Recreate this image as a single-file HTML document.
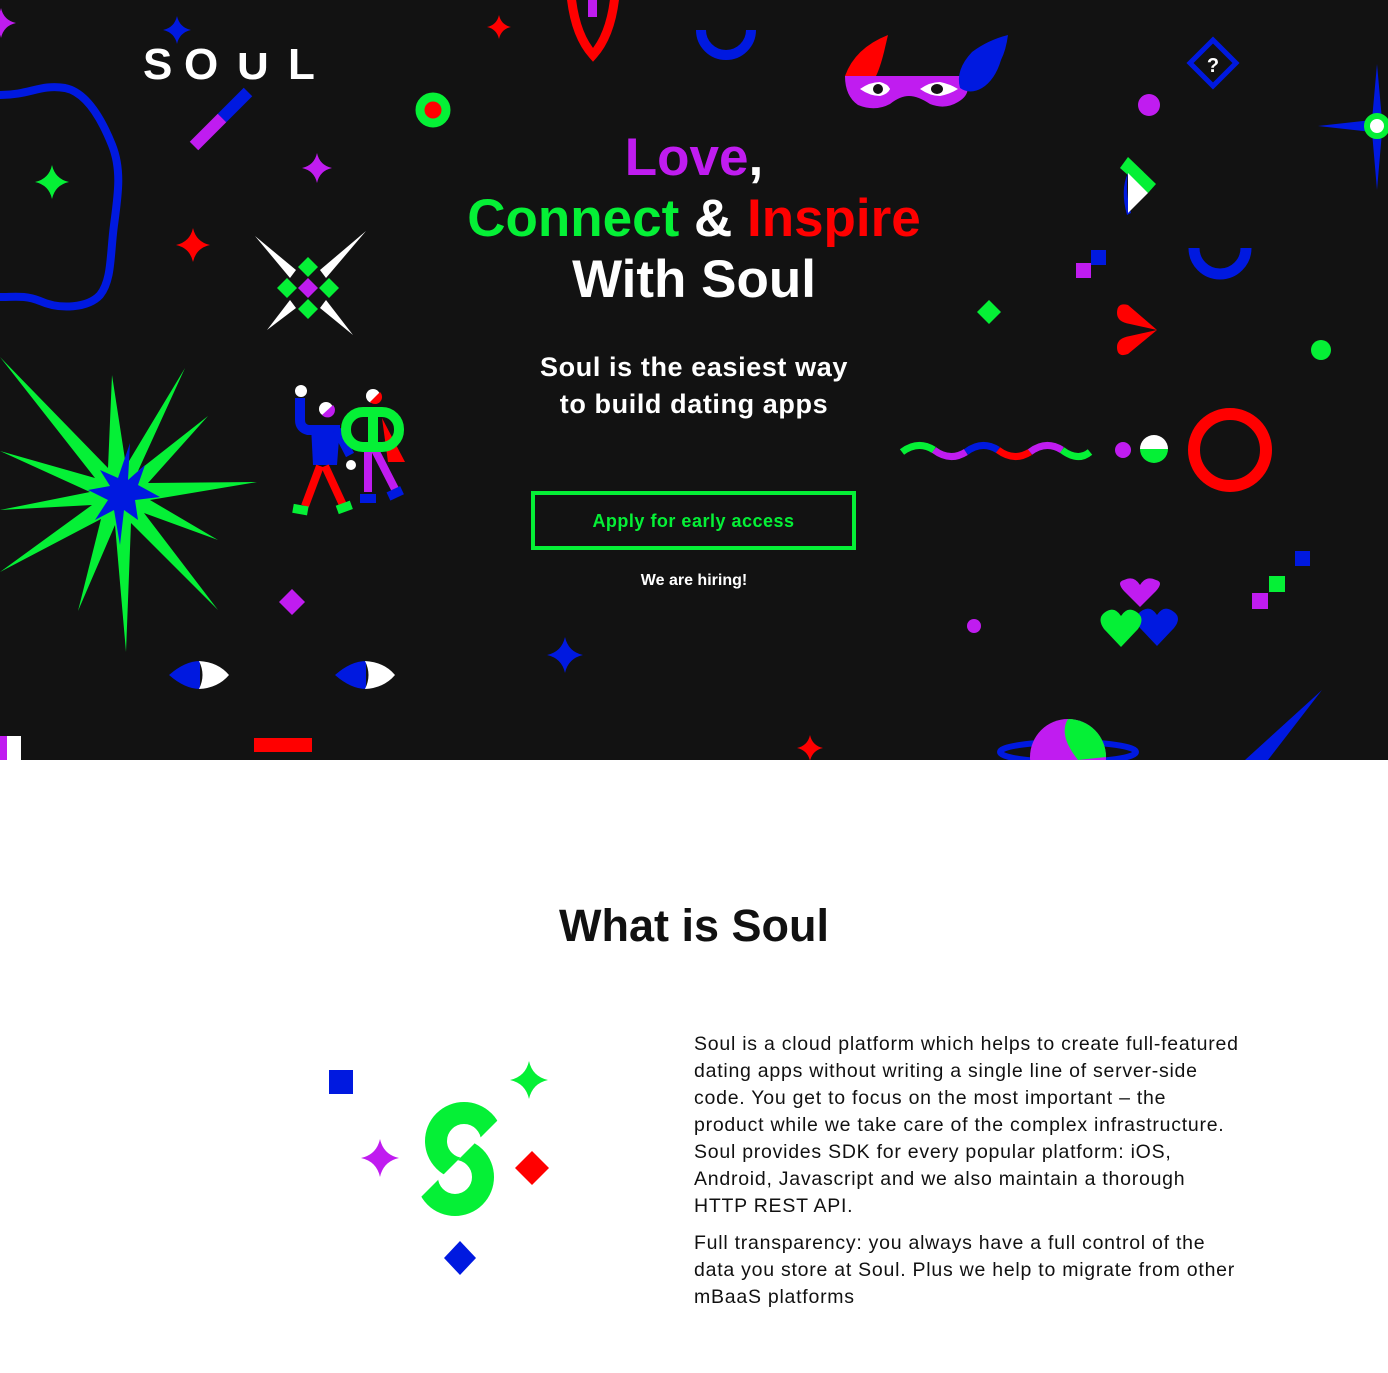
<!DOCTYPE html>
<html><head><meta charset="utf-8">
<style>
*{margin:0;padding:0;box-sizing:border-box}
html,body{width:1388px;height:1373px;background:#fff;overflow:hidden;font-family:"Liberation Sans",sans-serif}
.hero{position:relative;width:1388px;height:760px;background:#121212;overflow:hidden}
.hero svg{position:absolute;left:0;top:0}
.title{position:absolute;left:0;width:1388px;top:127px;text-align:center;font-weight:bold;font-size:53px;line-height:61px;color:#fff}
.sub{position:absolute;left:0;width:1388px;top:349px;text-align:center;font-weight:bold;font-size:27px;line-height:37px;color:#fff;letter-spacing:0.6px}
.btn{position:absolute;left:531px;top:491px;width:325px;height:59px;border:4px solid #05f036;color:#05f036;font-weight:bold;font-size:18px;line-height:53px;text-align:center;letter-spacing:0.5px}
.hire{position:absolute;left:0;width:1388px;top:572px;text-align:center;color:#fff;font-weight:bold;font-size:16px}
.what{position:absolute;left:0;width:1388px;top:900px;text-align:center;font-weight:bold;font-size:45px;color:#111}
.txt{position:absolute;left:694px;top:1031px;width:640px;font-size:19.5px;line-height:27px;color:#111;letter-spacing:0.75px}
.txt p{margin-bottom:10px}
</style></head><body>
<div class="hero">
<svg width="1388" height="760" viewBox="0 0 1388 760">
<defs>
<symbol id="st" viewBox="-10 -10 20 20"><path d="M0,-10 Q1.8,-1.8 10,0 Q1.8,1.8 0,10 Q-1.8,1.8 -10,0 Q-1.8,-1.8 0,-10Z"/></symbol>
</defs>
<use href="#st" x="-14" y="8" width="30" height="30" fill="#c01cf0"/>
<use href="#st" x="163" y="16" width="28" height="28" fill="#0019e0"/>
<g fill="#fff" font-family="Liberation Sans" font-weight="bold" font-size="44">
<text x="143" y="79">S</text><text x="184" y="79">O</text><text x="237" y="79">U</text><text x="288" y="79">L</text>
</g>
<rect x="237" y="46" width="30" height="7" fill="#121212"/>
<path d="M0,95 C30,95 40,84 65,88 C85,92 100,115 112,145 C122,170 118,195 114,225 C110,255 112,280 100,295 C88,308 60,310 40,301 C25,295 15,297 0,297" fill="none" stroke="#0019e0" stroke-width="8"/>
<use href="#st" x="35" y="165" width="34" height="34" fill="#05f036"/>
<line x1="248" y1="92" x2="222" y2="118" stroke="#0019e0" stroke-width="12"/>
<line x1="222" y1="118" x2="194" y2="146" stroke="#c01cf0" stroke-width="12"/>
<circle cx="433" cy="110" r="13" fill="#ff0000" stroke="#05f036" stroke-width="9"/>
<use href="#st" x="302" y="153" width="30" height="30" fill="#c01cf0"/>
<use href="#st" x="176" y="228" width="34" height="34" fill="#ff0000"/>
<g fill="#fff">
<polygon points="255,236 296,270 290,278"/><polygon points="366,231 326,278 320,270"/>
<polygon points="267,330 290,300 296,308"/><polygon points="353,335 320,308 326,300"/>
</g>
<g fill="#05f036">
<polygon points="308,257 318,267 308,277 298,267"/><polygon points="287,278 297,288 287,298 277,288"/>
<polygon points="329,278 339,288 329,298 319,288"/><polygon points="308,299 318,309 308,319 298,309"/>
</g>
<polygon points="308,278 318,288 308,298 298,288" fill="#c01cf0"/>
<polygon fill="#05f036" points="112,375 126,466 185,368 138,471 208,416 148,483 257,482 150,500 218,540 144,513 218,610 131,523 126,652 115,525 78,611 101,519 0,572 92,505 0,510 90,492 0,451 95,478 0,357 108,468"/>
<polygon fill="#0019e0" points="130,443 128,480 145,465 138,485 160,497 135,500 138,520 124,510 120,545 114,510 95,520 108,500 88,490 110,486 100,470 118,478"/>
<circle cx="301" cy="391" r="6" fill="#fff"/>
<path d="M300,398 V420 Q300,428 308,430 H340" fill="none" stroke="#0019e0" stroke-width="10"/>
<polygon points="311,426 340,426 337,465 313,465" fill="#0019e0"/>
<line x1="337" y1="430" x2="350" y2="455" stroke="#0019e0" stroke-width="9"/>
<circle cx="326" cy="409" r="7" fill="#fff"/><path d="M333,405 A7,7 0 0 1 322,415 Z" fill="#c01cf0"/>
<circle cx="351" cy="465" r="5" fill="#fff"/>
<line x1="320" y1="466" x2="305" y2="506" stroke="#ff0000" stroke-width="8"/>
<line x1="325" y1="466" x2="343" y2="505" stroke="#ff0000" stroke-width="8"/>
<rect x="293" y="505" width="15" height="9" fill="#05f036" transform="rotate(10 300 509)"/>
<rect x="337" y="503" width="15" height="9" fill="#05f036" transform="rotate(-20 344 508)"/>
<polygon points="382,418 405,462 388,462" fill="#ff0000"/>
<line x1="368" y1="448" x2="368" y2="492" stroke="#c01cf0" stroke-width="8"/>
<line x1="374" y1="448" x2="396" y2="491" stroke="#c01cf0" stroke-width="8"/>
<rect x="360" y="494" width="16" height="9" fill="#0019e0"/>
<rect x="388" y="489" width="15" height="9" fill="#0019e0" transform="rotate(-25 395 494)"/>
<rect x="346" y="412" width="53" height="35" rx="17" fill="none" stroke="#05f036" stroke-width="10"/>
<rect x="368" y="412" width="10" height="35" fill="#05f036"/>
<circle cx="373" cy="396" r="7" fill="#fff"/><path d="M380,392 A7,7 0 0 1 370,402 Z" fill="#ff0000"/>
<polygon points="292,589 305,602 292,615 279,602" fill="#c01cf0"/>
<path d="M169,675 Q185,661 200,661 L200,689 Q185,689 169,675Z" fill="#0019e0"/>
<path d="M199,661 Q218,662 229,675 Q218,688 199,689 Q206,675 199,661Z" fill="#fff"/>
<path d="M335,675 Q351,661 366,661 L366,689 Q351,689 335,675Z" fill="#0019e0"/>
<path d="M365,661 Q384,662 395,675 Q384,688 365,689 Q372,675 365,661Z" fill="#fff"/>
<rect x="0" y="736" width="7" height="24" fill="#c01cf0"/><rect x="7" y="736" width="14" height="24" fill="#fff"/>
<rect x="254" y="738" width="58" height="14" fill="#ff0000"/>
<use href="#st" x="487" y="15" width="24" height="24" fill="#ff0000"/>
<path d="M571,-5 Q575,35 593,55 Q611,35 615,-5" fill="none" stroke="#ff0000" stroke-width="9"/>
<rect x="588" y="0" width="9" height="17" fill="#c01cf0"/>
<path d="M701,30 A25,25 0 0 0 751,30" fill="none" stroke="#0019e0" stroke-width="10"/>
<use href="#st" x="547" y="637" width="36" height="36" fill="#0019e0"/>
<use href="#st" x="797" y="735" width="26" height="26" fill="#ff0000"/>
<path d="M845,76 Q855,48 888,35 L884,52 Q880,68 876,76Z" fill="#ff0000"/>
<path d="M845,76 H962 Q975,92 958,102 Q945,110 930,104 Q918,96 909,96 Q900,96 890,104 Q875,112 858,105 Q845,96 845,76Z" fill="#c01cf0"/>
<path d="M960,88 Q955,70 972,52 Q988,40 1008,35 Q1006,50 1001,60 Q995,80 982,88 Q970,95 960,88Z" fill="#0019e0"/>
<path d="M860,89 Q870,82 880,82 Q888,84 890,89 Q888,94 880,96 Q870,96 860,89Z" fill="#fff"/><ellipse cx="878" cy="89" rx="5" ry="5" fill="#121212"/>
<path d="M920,89 Q930,82 940,82 Q950,84 958,89 Q950,94 940,96 Q930,96 920,89Z" fill="#fff"/><ellipse cx="937" cy="89" rx="6" ry="5" fill="#121212"/>
<polygon points="1213,40 1236,63 1213,86 1190,63" fill="none" stroke="#0019e0" stroke-width="5"/>
<text x="1213" y="72" font-family="Liberation Sans" font-weight="bold" font-size="20" fill="#fff" text-anchor="middle">?</text>
<circle cx="1149" cy="105" r="11" fill="#c01cf0"/>
<polygon points="1377,64 1382,120 1388,126 1382,132 1377,190 1372,132 1318,126 1372,120" fill="#0019e0"/>
<circle cx="1377" cy="126" r="10" fill="#fff" stroke="#05f036" stroke-width="6"/>
<polygon points="1120,168 1128,157 1156,184 1148,193" fill="#05f036"/>
<path d="M1128,173 Q1120,190 1127,215 L1131,213 Q1125,192 1128,173Z" fill="#0019e0"/>
<polygon points="1128,173 1148,193 1128,213" fill="#fff"/>
<rect x="1076" y="263" width="15" height="15" fill="#c01cf0"/><rect x="1091" y="250" width="15" height="15" fill="#0019e0"/>
<path d="M1194,248 A26,26 0 0 0 1246,248" fill="none" stroke="#0019e0" stroke-width="11"/>
<polygon points="989,300 1001,312 989,324 977,312" fill="#05f036"/>
<path d="M1157,330 L1128,305 Q1117,302 1117,313 Q1117,322 1130,324Z M1157,330 L1130,336 Q1117,338 1117,347 Q1117,358 1128,354Z" fill="#ff0000"/>
<circle cx="1321" cy="350" r="10" fill="#05f036"/>
<g fill="none" stroke-width="7">
<path d="M902,452 Q918,440 934,450" stroke="#05f036"/>
<path d="M934,450 Q950,462 966,452" stroke="#c01cf0"/>
<path d="M966,452 Q982,440 998,450" stroke="#0019e0"/>
<path d="M998,450 Q1014,462 1030,452" stroke="#ff0000"/>
<path d="M1030,452 Q1046,440 1062,450" stroke="#c01cf0"/>
<path d="M1062,450 Q1078,462 1090,452" stroke="#05f036"/>
</g>
<circle cx="1123" cy="450" r="8" fill="#c01cf0"/>
<path d="M1140,449 A14,14 0 0 1 1168,449Z" fill="#fff"/><path d="M1140,449 A14,14 0 0 0 1168,449Z" fill="#05f036"/>
<circle cx="1230" cy="450" r="36" fill="none" stroke="#ff0000" stroke-width="12"/>
<path d="M1140,607 L1124,591 Q1116,582 1124,580 Q1134,575 1140,585 Q1146,575 1156,580 Q1164,582 1156,591Z" fill="#c01cf0"/>
<path d="M1157,646 L1140,628 Q1133,618 1140,612 Q1150,604 1157,615 Q1164,604 1174,612 Q1182,618 1174,628Z" fill="#0019e0"/>
<path d="M1121,647 L1104,629 Q1097,619 1104,613 Q1114,605 1121,616 Q1128,605 1138,613 Q1145,619 1138,629Z" fill="#05f036"/>
<rect x="1295" y="551" width="15" height="15" fill="#0019e0"/><rect x="1269" y="576" width="16" height="16" fill="#05f036"/><rect x="1252" y="593" width="16" height="16" fill="#c01cf0"/>
<circle cx="974" cy="626" r="7" fill="#c01cf0"/>
<ellipse cx="1068" cy="752" rx="68" ry="10" fill="none" stroke="#0019e0" stroke-width="6"/>
<circle cx="1068" cy="757" r="38" fill="#c01cf0"/>
<path d="M1068,719 A38,38 0 0 1 1106,757 L1078,760 Q1058,735 1068,719Z" fill="#05f036"/>
<polygon points="1322,690 1245,760 1268,760" fill="#0019e0"/>
</svg>
<div class="title"><span style="color:#c01cf0">Love</span>,<br><span style="color:#05f036">Connect</span> &amp; <span style="color:#ff0000">Inspire</span><br>With Soul</div>
<div class="sub">Soul is the easiest way<br>to build dating apps</div>
<div class="btn">Apply for early access</div>
<div class="hire">We are hiring!</div>
</div>
<div class="what">What is Soul</div>
<svg style="position:absolute;left:0;top:760px" width="694" height="613" viewBox="0 760 694 613">
<defs><symbol id="st2" viewBox="-10 -10 20 20"><path d="M0,-10 Q1.8,-1.8 10,0 Q1.8,1.8 0,10 Q-1.8,1.8 -10,0 Q-1.8,-1.8 0,-10Z"/></symbol>
<clipPath id="A"><polygon points="300,1000 618,1000 300,1318"/></clipPath>
<clipPath id="B"><polygon points="618,1000 618,1300 318,1300"/></clipPath>
</defs>
<rect x="329" y="1070" width="24" height="24" fill="#0019e0"/>
<use href="#st2" x="510" y="1061" width="38" height="38" fill="#05f036"/>
<use href="#st2" x="361" y="1139" width="38" height="38" fill="#c01cf0"/>
<polygon points="532,1151 549,1168 532,1185 515,1168" fill="#ff0000"/>
<polygon points="460,1241 476,1258 460,1275 444,1258" fill="#0019e0"/>
<circle cx="464" cy="1141" r="28" fill="none" stroke="#05f036" stroke-width="22" clip-path="url(#A)"/>
<circle cx="455" cy="1177" r="28" fill="none" stroke="#05f036" stroke-width="22" clip-path="url(#B)"/>
</svg>
<div class="txt">
<p>Soul is a cloud platform which helps to create full-featured<br>dating apps without writing a single line of server-side<br>code. You get to focus on the most important – the<br>product while we take care of the complex infrastructure.<br>Soul provides SDK for every popular platform: iOS,<br>Android, Javascript and we also maintain a thorough<br>HTTP REST API.</p>
<p>Full transparency: you always have a full control of the<br>data you store at Soul. Plus we help to migrate from other<br>mBaaS platforms</p>
</div>
</body></html>
